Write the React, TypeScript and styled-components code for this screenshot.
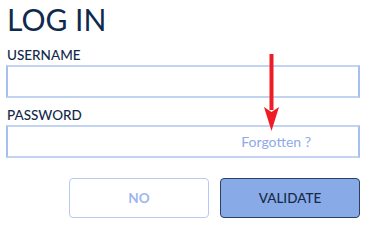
import React from "react";
import styled, { createGlobalStyle } from "styled-components";

const Global = createGlobalStyle`
  html, body { margin: 0; padding: 0; background: #fff; }
  body { font-family: Lato, "Open Sans", sans-serif; }
`;

const Page = styled.div`
  position: relative;
  width: 372px;
  height: 233px;
  box-sizing: border-box;
  padding: 1px 12px 0 6px;
  display: flex;
  flex-direction: column;
`;

const Title = styled.h1`
  margin: 0 0 0 1px;
  font-size: 30px;
  line-height: 36px;
  font-weight: 400;
  color: #0f2a4e;
`;

const Label = styled.label<{ $top: number }>`
  margin: ${(p) => p.$top}px 0 0 1px;
  font-size: 13.5px;
  line-height: 16px;
  color: #12294a;
  font-weight: 500;
`;

const Field = styled.div`
  margin-top: 2px;
  height: 33px;
  box-sizing: border-box;
  border: 2px solid #c3d4f3;
  border-left-color: #a6bff0;
  border-right-color: #a6bff0;
  display: flex;
  align-items: center;
  justify-content: flex-end;
  padding-right: 47px;
`;

const Forgot = styled.span`
  font-size: 14px;
  color: #8eaae9;
`;

const Buttons = styled.div`
  margin-top: 20px;
  display: flex;
  justify-content: flex-end;
  gap: 11px;
`;

const Button = styled.button<{ $primary?: boolean }>`
  width: 140px;
  height: 40px;
  box-sizing: border-box;
  border-radius: 4px;
  font-family: Lato, sans-serif;
  font-size: 13.5px;
  font-weight: ${(p) => (p.$primary ? 500 : 700)};
  border: 1px solid ${(p) => (p.$primary ? "#2b4066" : "#b7cbf1")};
  background: ${(p) => (p.$primary ? "#88abe8" : "#fff")};
  color: ${(p) => (p.$primary ? "#172a48" : "#9cb7ed")};
  padding: 0;
`;

const Arrow = styled.svg`
  position: absolute;
  left: 263px;
  top: 54px;
`;

export default function App() {
  return (
    <>
      <Global />
      <Page>
        <Title>LOG IN</Title>
        <Label $top={10}>USERNAME</Label>
        <Field />
        <Label $top={9}>PASSWORD</Label>
        <Field>
          <Forgot>Forgotten ?</Forgot>
        </Field>
        <Buttons>
          <Button>NO</Button>
          <Button $primary>VALIDATE</Button>
        </Buttons>
        <Arrow width="18" height="78" viewBox="0 0 18 78">
          <rect x="6.5" y="0" width="4" height="56" fill="#ee1c24" />
          <path d="M1 53 L8.5 77 L16 53 L8.5 58 Z" fill="#ee1c24" />
        </Arrow>
      </Page>
    </>
  );
}
